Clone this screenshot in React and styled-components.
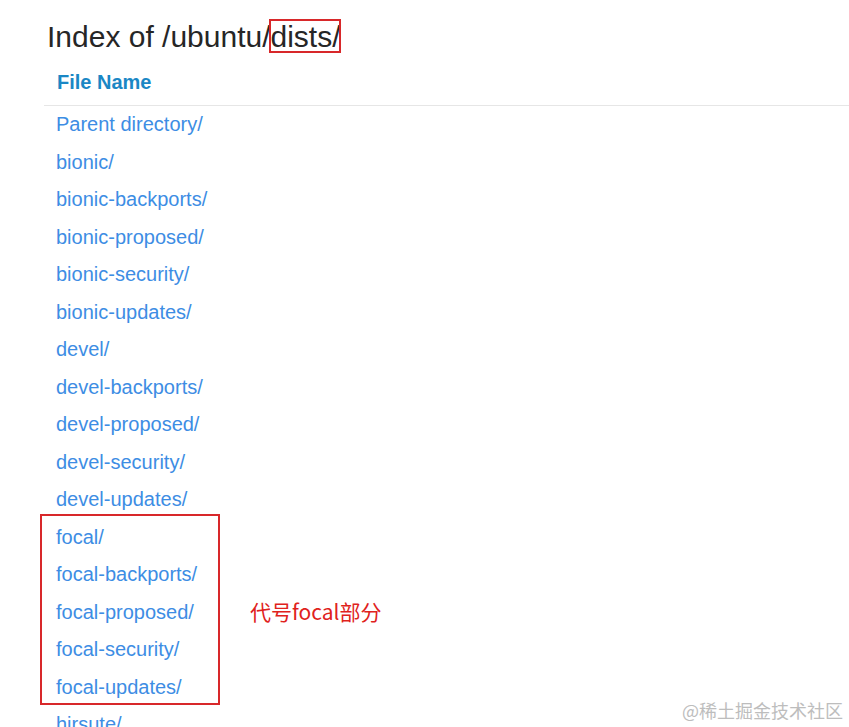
import React from "react";
import styled, { createGlobalStyle } from "styled-components";

const GlobalStyle = createGlobalStyle`
  body {
    margin: 0;
    background: #ffffff;
    font-family: "Liberation Sans", Arial, sans-serif;
    overflow: hidden;
  }
`;

const entries = [
  "Parent directory/",
  "bionic/",
  "bionic-backports/",
  "bionic-proposed/",
  "bionic-security/",
  "bionic-updates/",
  "devel/",
  "devel-backports/",
  "devel-proposed/",
  "devel-security/",
  "devel-updates/",
];

const focal = [
  "focal/",
  "focal-backports/",
  "focal-proposed/",
  "focal-security/",
  "focal-updates/",
];

const after = ["hirsute/"];

export default function App() {
  return (
    <Page>
      <GlobalStyle />
      <Title>
        Index of /ubuntu/<Marked>dists/</Marked>
      </Title>
      <Table>
        <HeadRow>File Name</HeadRow>
        {entries.map((e) => (
          <Row key={e}>
            <Link>{e}</Link>
          </Row>
        ))}
        <Group>
          {focal.map((e) => (
            <Row key={e}>
              <Link>{e}</Link>
            </Row>
          ))}
          <GroupBox />
          <Note>代号focal部分</Note>
        </Group>
        {after.map((e) => (
          <Row key={e}>
            <Link>{e}</Link>
          </Row>
        ))}
      </Table>
      <Watermark>@稀土掘金技术社区</Watermark>
    </Page>
  );
}

const Page = styled.div`
  position: relative;
  height: 727px;
  overflow: hidden;
  padding-top: 17px;
  box-sizing: border-box;
`;

const Title = styled.h1`
  margin: 0 0 0 47px;
  font-size: 30px;
  font-weight: 400;
  line-height: 40px;
  color: #262626;
`;

const Marked = styled.span`
  outline: 2px solid #d8282a;
  outline-offset: -2px;
  margin-left: -2px;
  padding: 1px 0 0 2px;
`;

const Table = styled.div`
  margin-left: 44px;
  margin-top: 3px;
`;

const HeadRow = styled.div`
  height: 45px;
  line-height: 44px;
  padding-left: 13px;
  font-size: 20px;
  font-weight: 700;
  color: #1a87c5;
  border-bottom: 1px solid #e6e6e6;
`;

const Row = styled.div`
  height: 37.5px;
  line-height: 37.5px;
  padding-left: 12px;
`;

const Link = styled.a`
  font-size: 20px;
  color: #3d8de4;
  text-decoration: none;
`;

const Group = styled.div`
  position: relative;
`;

const GroupBox = styled.div`
  position: absolute;
  left: -4px;
  top: -5px;
  width: 176px;
  height: 187px;
  border: 2px solid #d8282a;
`;

const Note = styled.div`
  position: absolute;
  left: 206px;
  top: 78px;
  font-family: "Noto Sans CJK SC", sans-serif;
  font-size: 21px;
  line-height: 28px;
  color: #e0221c;
`;

const Watermark = styled.div`
  position: absolute;
  right: 6px;
  bottom: 4px;
  font-family: "Noto Sans CJK SC", sans-serif;
  font-size: 18px;
  color: #bdbdbd;
`;
